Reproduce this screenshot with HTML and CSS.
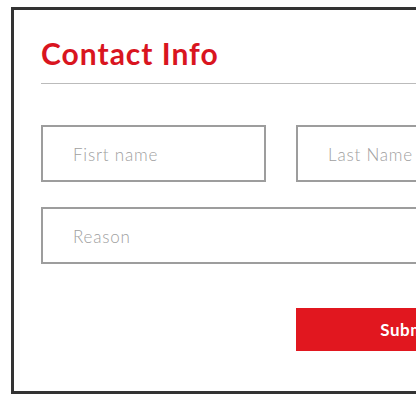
FILE: index.html
```html
<!DOCTYPE html>
<html lang="en">
<head>
    <meta charset="UTF-8">
    <meta name="viewport" content="width=device-width, initial-scale=1.0">
    <title>Contact Info</title>
    <link rel="stylesheet" href="styles.css">
</head>
<body>
    <div class="card">
        <h2>Contact Info</h2>
        <form class="contact-form">
            <input type="text" placeholder="Fisrt name">
            <input type="text" placeholder="Last Name">
            <input type="text" class="wide" placeholder="Reason">
            <button type="button" class="submit">Submit</button>
        </form>
    </div>
</body>
</html>
```

FILE: styles.css
```css
html {
    overflow: hidden;
}
body {
    font-family: Lato, "Open Sans", sans-serif;
    margin: 7px 0 0 11px;
    background: #fff;
}
.card {
    width: 540px;
    box-sizing: border-box;
    border: 3px solid #333;
    padding: 26px 27px 40px;
    background: #fff;
}
.card h2 {
    margin: 0;
    padding-bottom: 12px;
    border-bottom: 1px solid #bbb;
    color: #d9151f;
    font-size: 30px;
    line-height: 35px;
    font-weight: 700;
    letter-spacing: 1px;
}
.contact-form {
    display: grid;
    grid-template-columns: 225px 225px;
    column-gap: 30px;
    row-gap: 25px;
    margin-top: 41px;
}
.contact-form input {
    height: 57px;
    box-sizing: border-box;
    border: 2px solid #9d9d9d;
    padding: 2px 30px 0;
    font-family: inherit;
    font-size: 17px;
    font-weight: 300;
    letter-spacing: 0.8px;
    color: #555;
    outline: none;
}
.contact-form input::placeholder {
    color: #a0a0a0;
}
.contact-form .wide {
    grid-column: 1 / 3;
}
.submit {
    grid-column: 2;
    margin-top: 19px;
    height: 43px;
    border: none;
    background-color: #e1171f;
    color: #fff;
    font-family: inherit;
    font-size: 17px;
    font-weight: 700;
    letter-spacing: 0.5px;
}
```
